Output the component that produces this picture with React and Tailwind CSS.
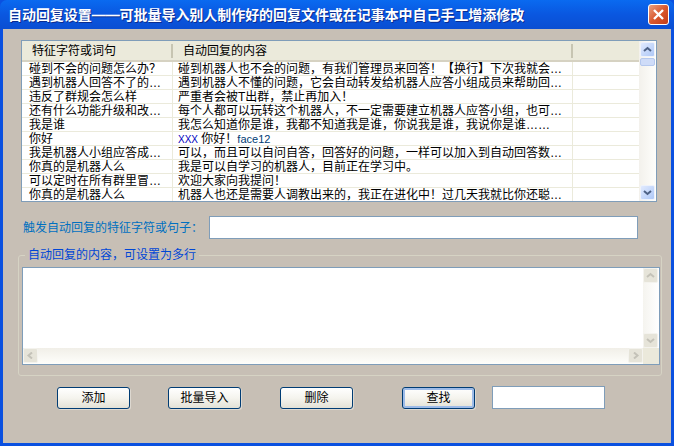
const rows = [
  ["碰到不会的问题怎么办？", "碰到机器人也不会的问题，有我们管理员来回答！【换行】下次我就会…"],
  ["遇到机器人回答不了的…", "遇到机器人不懂的问题，它会自动转发给机器人应答小组成员来帮助回…"],
  ["违反了群规会怎么样", "严重者会被T出群，禁止再加入！"],
  ["还有什么功能升级和改…", "每个人都可以玩转这个机器人，不一定需要建立机器人应答小组，也可…"],
  ["我是谁", "我怎么知道你是谁，我都不知道我是谁，你说我是谁，我说你是谁……"],
  ["你好", <><span className="text-[#0000c0] text-[10px]">XXX</span> 你好！<span className="text-[#003c74] text-[11px]">face12</span></>],
  ["我是机器人小组应答成…", "可以，而且可以自问自答，回答好的问题，一样可以加入到自动回答数…"],
  ["你真的是机器人么", "我是可以自学习的机器人，目前正在学习中。"],
  ["可以定时在所有群里冒…", "欢迎大家向我提问！"],
  ["你真的是机器人么", "机器人也还是需要人调教出来的，我正在进化中！过几天我就比你还聪…"],
];

function Chevron({ d, color = "#4d6185" }) {
  return (
    <svg width="9" height="7" viewBox="0 0 9 7" fill="none">
      <path d={d} stroke={color} strokeWidth="2" />
    </svg>
  );
}

function ScrollBtn({ d, active }) {
  return active ? (
    <div className="w-[15px] h-[15px] shrink-0 rounded-[2px] border border-[#eef2fb] bg-gradient-to-br from-[#e1eafe] to-[#aec8f7] flex items-center justify-center">
      <Chevron d={d} />
    </div>
  ) : (
    <div className="w-[15px] h-[15px] shrink-0 rounded-[2px] border border-[#f4f3ee] bg-[#e6e4d9] flex items-center justify-center">
      <Chevron d={d} color="#c4c2b8" />
    </div>
  );
}

function XpButton({ children, className = "", focused }) {
  return (
    <button
      className={`w-[73px] h-[22px] rounded-[3px] border border-[#003c74] bg-gradient-to-b from-white via-[#f5f4ee] to-[#e3e1d6] text-[12px] text-black flex items-center justify-center shrink-0 shadow-[1px_1px_0_#ddd8d0] ${
        focused ? "ring-2 ring-inset ring-[#9dbbe8]" : ""
      } ${className}`}
    >
      {children}
    </button>
  );
}

export default function App() {
  return (
    <div
      className="w-[674px] h-[446px] flex flex-col overflow-hidden bg-[#0a50e0] text-black text-[12px] leading-[14px]"
      style={{ fontFamily: '"Liberation Sans","Noto Sans CJK SC",sans-serif' }}
    >
      {/* Title bar */}
      <div className="h-[29px] shrink-0 pl-[8px] pr-[5px] flex items-center justify-between rounded-t-[7px] bg-gradient-to-b from-[#0a6af0] via-[#0a57e0] to-[#0a4ed2]">
        <span className="text-white font-bold text-[14px] tracking-[-0.05px] [text-shadow:1px_1px_0_#0a2c90]">
          自动回复设置——可批量导入别人制作好的回复文件或在记事本中自己手工增添修改
        </span>
        <div className="w-[21px] h-[21px] rounded-[3px] border border-white bg-gradient-to-br from-[#e8a080] via-[#d9582e] to-[#c23c18] flex items-center justify-center">
          <svg width="13" height="13" viewBox="0 0 13 13" fill="none">
            <path d="M2 2 L11 11 M11 2 L2 11" stroke="white" strokeWidth="2.4" />
          </svg>
        </div>
      </div>

      {/* Client area */}
      <div className="flex-1 mx-[3px] mb-[3px] bg-[#c7bfb5] flex flex-col pt-[11px] pl-[18px] rounded-none">
        {/* List view */}
        <div className="w-[636px] h-[162px] shrink-0 border border-[#7f9db9] bg-white flex overflow-hidden">
          <div className="flex-1 min-w-0 flex flex-col">
            <div className="h-[21px] shrink-0 bg-[#ebeadb] border-b-[2px] border-[#d6d2c2] flex items-center">
              <div className="w-[151px] pl-[10px] flex items-center h-[14px] border-r-2 border-[#c7c5b2] pt-[1px]">特征字符或词句</div>
              <div className="w-[400px] pl-[10px] flex items-center h-[14px] border-r-2 border-[#c7c5b2] pt-[1px]">自动回复的内容</div>
            </div>
            {rows.map((r, i) => (
              <div key={i} className="h-[14px] shrink-0 flex border-b border-[#ebeadb]">
                <div className="w-[151px] shrink-0 pl-[7px] pt-[1px] border-r border-[#ebeadb] whitespace-nowrap overflow-hidden h-[13px] leading-[12px]">{r[0]}</div>
                <div className="w-[400px] shrink-0 pl-[5px] pt-[1px] border-r border-[#ebeadb] whitespace-nowrap overflow-hidden h-[13px] leading-[12px]">{r[1]}</div>
              </div>
            ))}
          </div>
          <div className="w-[17px] shrink-0 bg-gradient-to-r from-[#f3f1ec] to-[#fefefb] flex flex-col justify-between pt-[1px] pb-[1px] pl-[1px]">
            <div className="flex flex-col">
              <ScrollBtn active d="M1 5 L4.5 2 L8 5" />
              <div className="w-[15px] h-[8px] mt-[1px] rounded-[2px] border border-[#b5c8ee] bg-[#cfdcf8]" />
            </div>
            <ScrollBtn active d="M1 2 L4.5 5 L8 2" />
          </div>
        </div>

        {/* Trigger field */}
        <div className="flex items-center mt-[14px] shrink-0">
          <span className="w-[188px] pl-[2px] text-[#0070c0] whitespace-nowrap">触发自动回复的特征字符或句子：</span>
          <div className="w-[429px] h-[23px] border border-[#7f9db9] bg-white" />
        </div>

        {/* Group box */}
        <fieldset className="w-[644px] h-[128px] -ml-[3px] mt-[9px] shrink-0 border border-[#d6d3c4] rounded-[3px] pl-[3px] pr-[2px] pt-[5px] min-w-0">
          <legend className="ml-[3px] px-[3px] text-[#0046d5] leading-[14px]">自动回复的内容，可设置为多行</legend>
          <div className="w-[638px] h-[98px] border border-[#7f9db9] bg-white flex flex-col">
            <div className="flex-1 flex min-h-0">
              <div className="flex-1" />
              <div className="w-[16px] bg-gradient-to-r from-[#f5f4ef] to-white flex flex-col justify-between">
                <ScrollBtn d="M1 5 L4.5 2 L8 5" />
                <ScrollBtn d="M1 2 L4.5 5 L8 2" />
              </div>
            </div>
            <div className="h-[16px] shrink-0 flex bg-gradient-to-b from-[#f1efe8] to-[#fefefb]">
              <ScrollBtn d="M6 0.5 L2.5 3.5 L6 6.5" />
              <div className="flex-1" />
              <ScrollBtn d="M3 0.5 L6.5 3.5 L3 6.5" />
              <div className="w-[16px] bg-[#ebe9db]" />
            </div>
          </div>
        </fieldset>

        {/* Buttons */}
        <div className="flex items-center mt-[10px] pl-[36px] shrink-0">
          <XpButton>添加</XpButton>
          <XpButton className="ml-[38px]">批量导入</XpButton>
          <XpButton className="ml-[39px]">删除</XpButton>
          <XpButton focused className="ml-[49px]">查找</XpButton>
          <div className="w-[113px] h-[23px] ml-[17px] border border-[#7f9db9] bg-white" />
        </div>
      </div>
    </div>
  );
}
